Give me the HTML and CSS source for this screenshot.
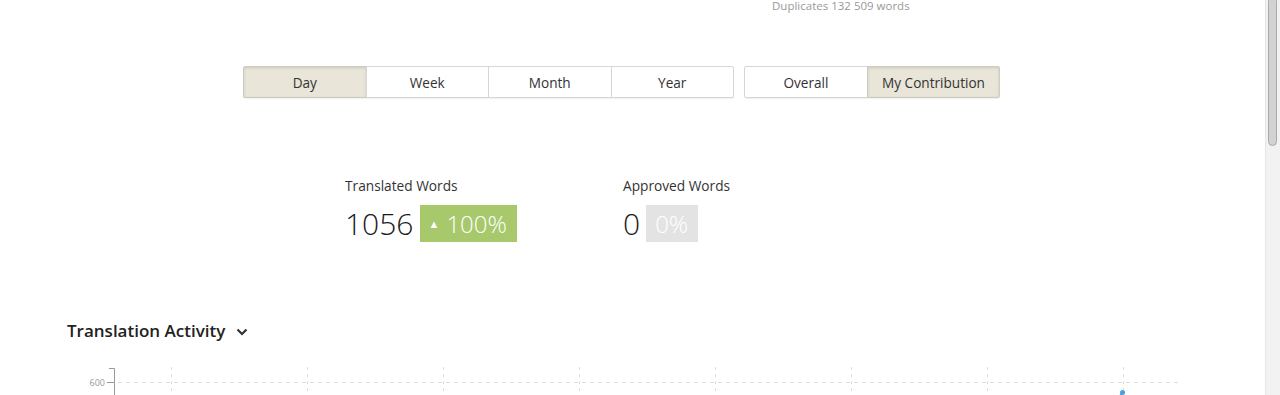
FILE: index.html
```html
<!DOCTYPE html>
<html>
<head>
    <title>Translation Statistics</title>
    <link rel="stylesheet" href="styles.css">
</head>
<body>
    <div class="page">
        <div class="content">
            <div class="duplicates">Duplicates 132 509 words</div>

            <div class="periods">
                <div class="btn-group range">
                    <button class="btn active">Day</button>
                    <button class="btn">Week</button>
                    <button class="btn">Month</button>
                    <button class="btn">Year</button>
                </div>
                <div class="btn-group scope">
                    <button class="btn">Overall</button>
                    <button class="btn wide active">My Contribution</button>
                </div>
            </div>

            <div class="stats">
                <div class="stat">
                    <div class="stat-label">Translated Words</div>
                    <div class="stat-value">
                        <span class="num">1056</span>
                        <span class="delta up"><span class="arrow">&#9650;</span>100%</span>
                    </div>
                </div>
                <div class="stat">
                    <div class="stat-label">Approved Words</div>
                    <div class="stat-value">
                        <span class="num">0</span>
                        <span class="delta none">0%</span>
                    </div>
                </div>
            </div>

            <h2 class="section-title">Translation Activity
                <svg class="chevron" width="12" height="8" viewBox="0 0 12 8"><path d="M1.5 1.5 L6 6 L10.5 1.5" fill="none" stroke="#333" stroke-width="2.2"/></svg>
            </h2>

            <svg class="chart" width="1200" height="40" viewBox="0 0 1200 40">
                <text x="45" y="20.5" class="axis-label" text-anchor="end">600</text>
                <path d="M47 17.5 H54.5 V40" fill="none" stroke="#999" stroke-width="1"/>
                <path d="M49 3.5 H54.5 V17" fill="none" stroke="#999" stroke-width="1"/>
                <line x1="58" y1="17.5" x2="1118" y2="17.5" stroke="#ddd" stroke-dasharray="4 4"/>
                <g stroke="#ddd" stroke-dasharray="3 4">
                    <line x1="111.5" y1="2" x2="111.5" y2="40"/>
                    <line x1="247.5" y1="2" x2="247.5" y2="40"/>
                    <line x1="383.5" y1="2" x2="383.5" y2="40"/>
                    <line x1="519.5" y1="2" x2="519.5" y2="40"/>
                    <line x1="655.5" y1="2" x2="655.5" y2="40"/>
                    <line x1="791.5" y1="2" x2="791.5" y2="40"/>
                    <line x1="927.5" y1="2" x2="927.5" y2="40"/>
                    <line x1="1063.5" y1="2" x2="1063.5" y2="40"/>
                </g>
                <path d="M1061 29 L1058 40" stroke="#4a9fe0" stroke-width="2"/>
                <circle cx="1062.5" cy="27.5" r="2.5" fill="#4a9fe0"/>
            </svg>
        </div>
        <div class="scrollbar">
            <div class="thumb"></div>
        </div>
    </div>
</body>
</html>
```

FILE: styles.css
```css
body {
    margin: 0;
    font-family: "Open Sans", Arial, sans-serif;
    color: #333;
    background: #fff;
    overflow: hidden;
}
.page {
    display: flex;
    height: 395px;
}
.content {
    flex: 1;
    overflow: hidden;
}
.duplicates {
    margin-top: -2px;
    padding-left: 772px;
    font-size: 11.5px;
    line-height: 15px;
    color: #999;
}
.periods {
    display: flex;
    gap: 10px;
    margin-top: 53px;
    padding-left: 243px;
}
.btn-group {
    display: flex;
    border-radius: 2px;
    box-shadow: 0 1px 1px rgba(0,0,0,0.06);
}
.btn-group.range {
    width: 491px;
}
.btn-group.scope {
    width: 256px;
}
.btn {
    flex: 1;
    height: 32px;
    margin: 0 0 0 -1px;
    padding: 0;
    font-family: inherit;
    font-size: 13.6px;
    color: #333;
    background: #fff;
    border: 1px solid #d6d6d6;
}
.btn:first-child {
    margin-left: 0;
    border-radius: 2px 0 0 2px;
}
.btn:last-child {
    border-radius: 0 2px 2px 0;
}
.scope .btn {
    flex: 0 0 124px;
}
.scope .btn.wide {
    flex: 0 0 133px;
}
.btn.active {
    background: #e9e5d9;
    border-color: #cfcbbf;
    box-shadow: inset 0 1px 3px rgba(0,0,0,0.12);
}
.stats {
    display: flex;
    gap: 106px;
    margin-top: 79px;
    padding-left: 345px;
}
.stat {
    min-width: 172px;
}
.stat-label {
    font-size: 13.7px;
    line-height: 18px;
    color: #333;
}
.stat-value {
    display: flex;
    align-items: center;
    gap: 6px;
    margin-top: 10px;
}
.num {
    font-size: 30px;
    font-weight: 300;
    line-height: 37px;
    color: #1a1a1a;
}
.delta {
    height: 37px;
    line-height: 37px;
    padding: 0 10px 0 9px;
    font-size: 24px;
    font-weight: 300;
    color: #fff;
}
.delta.up {
    background: #a7c96b;
}
.delta.none {
    background: #e3e3e3;
}
.arrow {
    font-size: 11px;
    vertical-align: 5px;
    margin-right: 7px;
}
.section-title {
    display: flex;
    align-items: center;
    gap: 11px;
    margin: 77px 0 0 67px;
    font-size: 17px;
    font-weight: 600;
    line-height: 24px;
    color: #222;
}
.chevron {
    margin-top: 1px;
}
.chart {
    display: block;
    margin: 22px 0 0 60px;
}
.axis-label {
    font-family: "Open Sans", Arial, sans-serif;
    font-size: 9px;
    fill: #999;
}
.scrollbar {
    width: 15px;
    background: #f2f2f2;
    border-left: 1px solid #e6e6e6;
    box-sizing: border-box;
}
.thumb {
    width: 9px;
    height: 150px;
    margin: -4px 0 0 2px;
    background: #d2d2d2;
    border: 1px solid #aaa;
    border-radius: 5px;
    box-sizing: border-box;
}
```
